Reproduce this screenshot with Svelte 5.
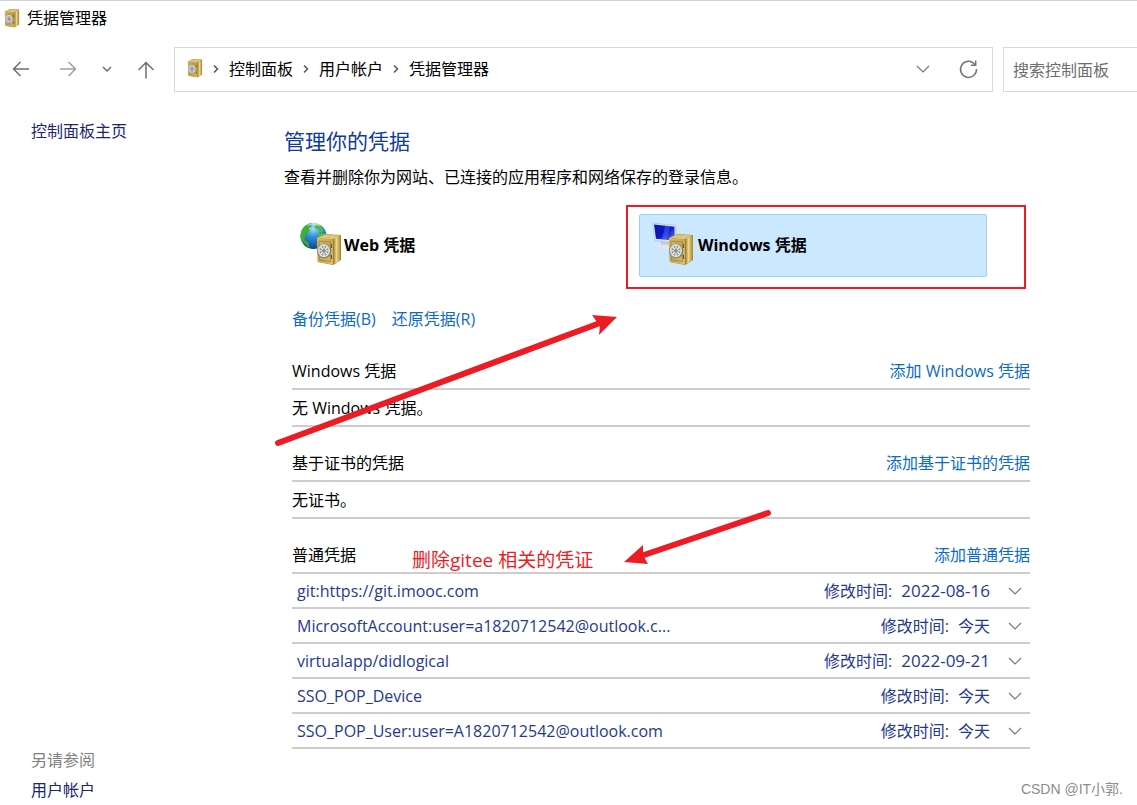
<script>
  const crumbs = ['控制面板', '用户帐户', '凭据管理器'];

  const sections = [
    { title: 'Windows 凭据', add: '添加 Windows 凭据', empty: '无 Windows 凭据。', items: [] },
    { title: '基于证书的凭据', add: '添加基于证书的凭据', empty: '无证书。', items: [] },
    {
      title: '普通凭据',
      add: '添加普通凭据',
      empty: '',
      items: [
        { name: 'git:https://git.imooc.com', date: '2022-08-16' },
        { name: 'MicrosoftAccount:user=a1820712542@outlook.c...', date: '今天' },
        { name: 'virtualapp/didlogical', date: '2022-09-21' },
        { name: 'SSO_POP_Device', date: '今天' },
        { name: 'SSO_POP_User:user=A1820712542@outlook.com', date: '今天' }
      ]
    }
  ];
</script>

<svelte:head><title>凭据管理器</title></svelte:head>

{#snippet safe()}
  <path d="M1 4 9 0 25 1 25 26 17 31 2 28Z" fill="#a98a35" />
  <path d="M1 4 9 0.500 24.500 1.500 17 5.500Z" fill="#dcc57a" />
  <path d="M17 5.500 24.500 1.500V26L17 30.500Z" fill="url(#safe-side)" />
  <path d="M1 4 17 5.500V30.500L1.500 28Z" fill="url(#safe-front)" />
  <path d="M3 7 14.500 8V27.500L3.500 26Z" fill="none" stroke="#a18336" stroke-width="0.800" />
  <path d="M15.500 10v4M15.500 21v4" stroke="#6f5a22" stroke-width="1.200" />
  <ellipse cx="8.200" cy="17" rx="7" ry="7.600" fill="#85847e" />
  <ellipse cx="7.900" cy="16.700" rx="6" ry="6.600" fill="#dededb" />
  <ellipse cx="7.900" cy="16.700" rx="4.500" ry="5" fill="#96958f" />
  <path d="M7.900 11.500v10.500M3 16.700h10M4.500 13l7 7.500M11.500 13l-7 7.500" stroke="#f0f0ee" stroke-width="1.100" />
  <ellipse cx="7.900" cy="16.700" rx="1.800" ry="2" fill="#8b8b87" />
{/snippet}

{#snippet chevron()}
  <svg width="14" height="8" viewBox="0 0 14 8" aria-hidden="true">
    <path d="M1 1 7 7 13 1" fill="none" stroke="currentColor" stroke-width="1.200" />
  </svg>
{/snippet}

<svg class="defs" width="0" height="0" aria-hidden="true">
  <defs>
    <linearGradient id="safe-front" x1="0" y1="0" x2="1" y2="1">
      <stop offset="0" stop-color="#d6bd6b" />
      <stop offset="0.500" stop-color="#c6a850" />
      <stop offset="1" stop-color="#dcc473" />
    </linearGradient>
    <linearGradient id="safe-side" x1="0" y1="0" x2="1" y2="0">
      <stop offset="0" stop-color="#8f7126" />
      <stop offset="0.450" stop-color="#ecd98e" />
      <stop offset="1" stop-color="#ad8a34" />
    </linearGradient>
    <radialGradient id="globe-sea" cx="0.500" cy="0.200" r="0.850">
      <stop offset="0" stop-color="#a8e4fa" />
      <stop offset="0.400" stop-color="#2f8fdb" />
      <stop offset="1" stop-color="#0b3b8f" />
    </radialGradient>
    <linearGradient id="screen" x1="0" y1="0" x2="1" y2="1">
      <stop offset="0" stop-color="#0a1c9c" />
      <stop offset="0.500" stop-color="#0b17c8" />
      <stop offset="1" stop-color="#5878ee" />
    </linearGradient>
  </defs>
</svg>

<div class="window">
  <header>
    <div class="titlebar">
      <svg width="16" height="19" viewBox="0 0 26 32" aria-hidden="true">{@render safe()}</svg>
      <span>凭据管理器</span>
    </div>

    <div class="toolbar">
      <nav class="history" aria-label="导航">
        <button aria-label="后退">
          <svg width="18" height="18" viewBox="0 0 18 18"><path d="M17 8H1.500M8.500 1 1.500 8l7 7" /></svg>
        </button>
        <button class="dim" aria-label="前进">
          <svg width="18" height="18" viewBox="0 0 18 18"><path d="M1 8h15.500M9.500 1l7 7-7 7" /></svg>
        </button>
        <button class="recent" aria-label="最近位置">
          <svg width="10" height="8" viewBox="0 0 10 8"><path d="M1 1 5 5 9 1" /></svg>
        </button>
        <button aria-label="上移">
          <svg width="18" height="18" viewBox="0 0 18 18"><path d="M9 17.500V1.500M1.500 9 9 1.500 16.500 9" /></svg>
        </button>
      </nav>

      <div class="address">
        <svg width="16" height="19" viewBox="0 0 26 32" aria-hidden="true">{@render safe()}</svg>
        {#each crumbs as crumb}
          <svg class="sep" width="6" height="8" viewBox="0 0 6 8" aria-hidden="true"><path d="M1 0.500 4.500 4 1 7.500" /></svg>
          <a href="#top">{crumb}</a>
        {/each}
        <span class="fill"></span>
        <button class="drop" aria-label="以前的位置">{@render chevron()}</button>
        <button class="reload" aria-label="刷新">
          <svg width="20" height="20" viewBox="0 0 20 20">
            <path d="M18.500 10A8 8 0 1 1 15.700 4.300L17.500 6M17.700 1.500V6.200H13" />
          </svg>
        </button>
      </div>

      <input class="search" type="search" placeholder="搜索控制面板" aria-label="搜索控制面板" />
    </div>
  </header>

  <div class="body">
    <aside>
      <a href="#home">控制面板主页</a>
      <div class="related">
        <span>另请参阅</span>
        <a href="#accounts">用户帐户</a>
      </div>
    </aside>

    <main>
      <h1>管理你的凭据</h1>
      <p class="intro">查看并删除你为网站、已连接的应用程序和网络保存的登录信息。</p>

      <div class="vaults">
        <button class="vault">
          <svg width="44" height="46" viewBox="0 0 44 46" aria-hidden="true">
            <g transform="translate(2 0)">
              <circle cx="13.500" cy="14" r="13" fill="url(#globe-sea)" />
              <path d="M1.500 9C3.500 4 7.500 1.500 11.500 1l1 3-4 2 1 4-4 3-1 5 4 3 1 5C4.500 24 0.500 19 0.500 14Z" fill="#3fae35" />
              <path d="M16 2l5 2 3 5-4 1-3-3-3-1ZM18 12l6-1 2 4-3 6-5 1Z" fill="#55b83e" />
              <path d="M2.500 20c3 1 4 3 7 6-4-1-6-3-7-6Z" fill="#1f7d2b" />
              <path d="M6 4c5-4 11-4 15 0-5-1-10-1-15 0Z" fill="#e3f7ff" opacity="0.600" />
            </g>
            <g transform="translate(18 12)">{@render safe()}</g>
          </svg>
          <span>Web 凭据</span>
        </button>

        <div class="marked">
          <button class="vault selected">
            <svg width="44" height="46" viewBox="0 0 44 46" aria-hidden="true">
              <path d="M9 19l8 1 1 5-5 2-6-2 2-2Z" fill="#c3ccd6" />
              <ellipse cx="12" cy="25" rx="7" ry="2.500" fill="#dfe5eb" />
              <path d="M0.500 1 24 3.500V21L3 18.500Z" fill="#dce6f1" stroke="#a9b8ca" stroke-width="0.600" />
              <path d="M2 2.500 22.500 4.800V18.500L4 16.800Z" fill="url(#screen)" />
              <path d="M13 3.700 18 4.200 14.500 17.700 10 17.300Z" fill="#6c8cff" opacity="0.350" />
              <g transform="translate(16 12)">{@render safe()}</g>
            </svg>
            <span>Windows 凭据</span>
          </button>
        </div>
      </div>

      <div class="actions">
        <a href="#backup">备份凭据(B)</a>
        <a href="#restore">还原凭据(R)</a>
      </div>

      <div class="groups">
        {#each sections as section}
          <section>
            <div class="head">
              <h2>{section.title}</h2>
              <a href="#add">{section.add}</a>
            </div>
            {#if section.empty}
              <p class="empty">{section.empty}</p>
            {/if}
            {#if section.items.length}
              <ul>
                {#each section.items as item}
                  <li>
                    <button class="entry" aria-expanded="false">
                      <span class="name">{item.name}</span>
                      <span>修改时间:</span>
                      <span class:numeric={/^\d/.test(item.date)}>{item.date}</span>
                      {@render chevron()}
                    </button>
                  </li>
                {/each}
              </ul>
            {/if}
          </section>
        {/each}
      </div>

      <svg class="arrows" width="867" height="713" viewBox="270 92 867 713" aria-hidden="true">
        <path d="M278 443 600 323M768 513 641 556" />
        <path class="tip" d="M617 317 592 315 597 322 600 326 599 335ZM624 562 643 545 643 555 648 564Z" />
      </svg>
      <span class="note">删除gitee 相关的凭证</span>
    </main>
  </div>

  <footer>CSDN @IT小郭.</footer>
</div>

<style>
  :global(body) {
    margin: 0;
    background: #fff;
  }

  .window {
    position: relative;
    display: flex;
    flex-direction: column;
    box-sizing: border-box;
    min-height: 100vh;
    border-top: 1px solid #d0d3d8;
    overflow: hidden;
    color: #000;
    font: 16px/20px 'Open Sans', 'Noto Sans CJK SC', sans-serif;
  }

  .defs {
    position: absolute;
  }

  a {
    color: inherit;
    text-decoration: none;
  }

  button {
    display: flex;
    align-items: center;
    padding: 0;
    border: 0;
    background: none;
    color: inherit;
    font: inherit;
    text-align: left;
  }

  h1,
  h2,
  p,
  ul {
    margin: 0;
    padding: 0;
    font-weight: 400;
    list-style: none;
  }

  .titlebar {
    display: flex;
    align-items: center;
    gap: 7px;
    height: 34px;
    padding-left: 4px;
  }

  .toolbar {
    display: grid;
    grid-template-columns: 164px 1fr 134px;
    gap: 10px;
    height: 45px;
    padding-top: 12px;
  }

  .history {
    display: flex;
    align-items: center;
    gap: 29px;
    padding-left: 12px;
    color: #6e6e6e;
  }

  .history .dim {
    color: #a0a0a0;
  }

  .history .recent {
    margin-right: -4px;
    margin-left: -4px;
  }

  .history path,
  .sep path,
  .reload path {
    fill: none;
    stroke: currentColor;
    stroke-width: 1.5;
  }

  .address {
    display: flex;
    align-items: center;
    gap: 10px;
    padding: 0 14px 2px 12px;
    border: 1px solid #d9d9d9;
  }

  .sep {
    color: #555;
  }

  .fill {
    flex: 1;
  }

  .drop,
  .reload {
    color: #757575;
  }

  .drop {
    margin-right: 18px;
  }

  .search {
    box-sizing: border-box;
    min-width: 0;
    height: 45px;
    padding: 0 9px;
    border: 1px solid #d9d9d9;
    border-right: 0;
    border-radius: 0;
    background: #fff;
    font: inherit;
  }

  .search::placeholder {
    color: #6d6d6d;
    opacity: 1;
  }

  .body {
    display: grid;
    flex: 1;
    grid-template-columns: 270px 1fr;
  }

  aside {
    display: flex;
    flex-direction: column;
    justify-content: space-between;
    padding: 29px 0 5px 31px;
    color: #1c2670;
  }

  .related {
    display: grid;
    gap: 10px;
  }

  .related span {
    color: #808080;
  }

  main {
    position: relative;
    padding: 35px 107px 0 14px;
  }

  h1 {
    color: #103a9c;
    font-size: 21px;
    line-height: 28px;
  }

  .intro {
    margin-top: 12px;
  }

  .vaults {
    display: grid;
    grid-template-columns: 1fr 1fr;
    gap: 6px;
    margin: 27px 43px 0 1px;
  }

  .vault {
    box-sizing: border-box;
    width: 100%;
    height: 63px;
    gap: 2px;
    padding: 0 0 2px 12px;
    border: 1px solid transparent;
    border-radius: 2px;
    font-weight: 700;
  }

  .selected {
    border-color: #99d1ff;
    background: #cce8ff;
  }

  .marked {
    position: relative;
  }

  .marked::after {
    position: absolute;
    inset: -9px -39px -12px -13px;
    border: 2px solid #ed1c24;
    content: '';
    pointer-events: none;
  }

  .actions {
    display: flex;
    gap: 16px;
    margin: 32px 0 0 8px;
    color: #0a6bcf;
  }

  .groups {
    display: grid;
    gap: 18px;
    margin: 24px 0 0 8px;
  }

  .head {
    display: flex;
    justify-content: space-between;
    padding: 8px 0 7px;
    border-bottom: 2px solid #cdcdcd;
  }

  h2 {
    font-size: 16px;
  }

  .head a {
    color: #0a6bcf;
  }

  .empty {
    padding: 8px 0 7px;
    border-bottom: 2px solid #cdcdcd;
  }

  li {
    border-bottom: 2px solid #cdcdcd;
  }

  .entry {
    width: 100%;
    height: 33px;
    gap: 9px;
    padding: 0 8px 0 5px;
    color: #26388f;
  }

  .name {
    flex: 1;
  }

  .numeric {
    font-size: 17px;
  }

  .entry svg {
    margin-left: 9px;
    color: #777;
  }

  .arrows {
    position: absolute;
    top: 0;
    left: 0;
    fill: none;
    stroke: #ed1c24;
    stroke-linecap: round;
    stroke-width: 6;
    pointer-events: none;
  }

  .arrows .tip {
    fill: #ed1c24;
    stroke: none;
  }

  .note {
    position: absolute;
    top: 456px;
    left: 142px;
    color: #ed1c24;
    font-size: 19px;
    line-height: 24px;
  }

  footer {
    position: absolute;
    right: 14px;
    bottom: 6px;
    color: #8c8c8c;
    font-family: 'Liberation Sans', 'Noto Sans CJK SC', sans-serif;
    font-size: 14px;
  }
</style>
